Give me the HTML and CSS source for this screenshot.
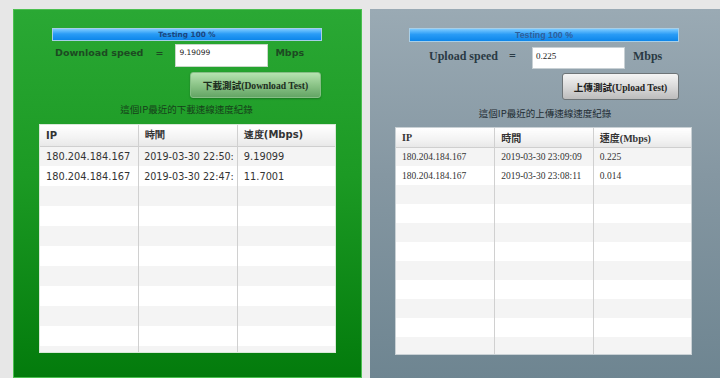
FILE: index.html
```html
<!DOCTYPE html>
<html>
<head>
<meta charset="utf-8">
<link rel="stylesheet" href="styles.css">
</head>
<body>
<div class="wrap">
  <section class="panel dl">
    <div class="progress"><span>Testing 100 %</span></div>
    <div class="speed-row">
      <span class="label">Download speed</span>
      <span class="eq">=</span>
      <span class="box">9.19099</span>
      <span class="unit">Mbps</span>
    </div>
    <div class="btn-row"><button class="btn">下載測試(Download Test)</button></div>
    <div class="caption">這個IP最近的下載速線速度紀錄</div>
    <div class="grid">
      <table>
        <thead><tr><th>IP</th><th>時間</th><th>速度(Mbps)</th></tr></thead>
        <tbody>
          <tr><td>180.204.184.167</td><td>2019-03-30 22:50:</td><td>9.19099</td></tr>
          <tr><td>180.204.184.167</td><td>2019-03-30 22:47:</td><td>11.7001</td></tr>
          <tr><td></td><td></td><td></td></tr>
          <tr><td></td><td></td><td></td></tr>
          <tr><td></td><td></td><td></td></tr>
          <tr><td></td><td></td><td></td></tr>
          <tr><td></td><td></td><td></td></tr>
          <tr><td></td><td></td><td></td></tr>
          <tr><td></td><td></td><td></td></tr>
          <tr><td></td><td></td><td></td></tr>
          <tr><td></td><td></td><td></td></tr>
        </tbody>
      </table>
    </div>
  </section>
  <section class="panel ul">
    <div class="progress"><span>Testing 100 %</span></div>
    <div class="speed-row">
      <span class="label">Upload speed</span>
      <span class="eq">=</span>
      <span class="box">0.225</span>
      <span class="unit">Mbps</span>
    </div>
    <div class="btn-row"><button class="btn">上傳測試(Upload Test)</button></div>
    <div class="caption">這個IP最近的上傳速線速度紀錄</div>
    <div class="grid">
      <table>
        <thead><tr><th>IP</th><th>時間</th><th>速度(Mbps)</th></tr></thead>
        <tbody>
          <tr><td>180.204.184.167</td><td>2019-03-30 23:09:09</td><td>0.225</td></tr>
          <tr><td>180.204.184.167</td><td>2019-03-30 23:08:11</td><td>0.014</td></tr>
          <tr><td></td><td></td><td></td></tr>
          <tr><td></td><td></td><td></td></tr>
          <tr><td></td><td></td><td></td></tr>
          <tr><td></td><td></td><td></td></tr>
          <tr><td></td><td></td><td></td></tr>
          <tr><td></td><td></td><td></td></tr>
          <tr><td></td><td></td><td></td></tr>
          <tr><td></td><td></td><td></td></tr>
          <tr><td></td><td></td><td></td></tr>
        </tbody>
      </table>
    </div>
  </section>
</div>
</body>
</html>
```

FILE: styles.css
```css
html, body {
  margin: 0;
  padding: 0;
  background: #e7e7e7;
  width: 720px;
  height: 378px;
  overflow: hidden;
}
.wrap {
  display: flex;
  gap: 8px;
  padding: 9px 0 0 13px;
  box-sizing: border-box;
  height: 378px;
}
.panel {
  box-sizing: border-box;
  height: 369px;
  display: flex;
  flex-direction: column;
}
.dl {
  width: 349px;
  background: linear-gradient(to bottom, #2aa834 0%, #1c9a24 45%, #037b0c 100%);
  border: 1px solid #4cc050;
  font-family: "DejaVu Sans", Verdana, sans-serif;
  padding: 18px 0 0 0;
}
.ul {
  width: 350px;
  background: linear-gradient(to bottom, #9aaab4 0%, #8597a2 45%, #6e8591 100%);
  font-family: "Liberation Serif", "Noto Sans CJK TC", serif;
  padding: 19px 0 0 0;
}
.progress {
  box-sizing: border-box;
  height: 13px;
  margin: 0 39px 0 38px;
  background: linear-gradient(to bottom, #7ccaff 0%, #2a9cf6 45%, #0d86ea 100%);
  border: 1px solid #a8cfe8;
  display: flex;
  align-items: center;
  justify-content: center;
}
.progress span {
  font-size: 7.3px;
  color: #1a4680;
  line-height: 1;
  font-weight: bold;
}
.ul .progress {
  margin: 0 41px 0 39px;
  height: 14px;
}
.ul .progress span {
  font-family: "Liberation Sans", Arial, sans-serif;
  font-size: 8.8px;
  font-weight: bold;
  color: #2f5f9a;
}
.speed-row {
  display: flex;
  align-items: center;
  margin-top: 3px;
  height: 23px;
}
.dl .speed-row { padding-left: 41px; }
.ul .speed-row { padding-left: 59px; margin-top: 5px; height: 22px; }
.label, .unit, .eq {
  font-weight: bold;
  font-size: 9.5px;
  color: #1d4a22;
  margin-bottom: 6px;
}
.eq {
  margin-left: 12px;
}
.box {
  box-sizing: border-box;
  width: 93px;
  height: 23px;
  background: #fff;
  border: 1px solid #c8d8c8;
  margin-left: 12px;
  font-size: 7.5px;
  color: #222;
  padding: 3px 0 0 3px;
}
.unit { margin-left: 7px; }
.ul .label, .ul .unit, .ul .eq {
  font-size: 12px;
  color: #2a3a44;
  margin-bottom: 3px;
}
.ul .eq { margin-left: 11px; }
.ul .box {
  height: 22px;
  margin-left: 16px;
  font-size: 9px;
  border-color: #c8d0d4;
}
.ul .unit { margin-left: 8px; }
.btn-row {
  display: flex;
  justify-content: flex-end;
  margin-top: 5px;
}
.btn {
  box-sizing: border-box;
  font-family: "Liberation Serif", "Noto Sans CJK TC", serif;
  font-weight: bold;
  font-size: 9.6px;
  color: #1d2e1e;
  border-radius: 3px;
  padding: 0;
}
.dl .btn {
  width: 131px;
  height: 26px;
  margin-right: 40px;
  background: linear-gradient(to bottom, #b6e3b0 0%, #8cc488 50%, #64a565 100%);
  border: 1px solid #86be86;
  box-shadow: 0 1px 2px rgba(0,0,0,0.25);
}
.ul .btn {
  width: 117px;
  height: 27px;
  margin-right: 41px;
  margin-top: -1px;
  color: #222;
  background: linear-gradient(to bottom, #f4f4f4 0%, #dadada 50%, #bcbcbc 100%);
  border: 1px solid #6d7477;
}
.caption {
  text-align: center;
  font-family: "Noto Sans CJK TC", sans-serif;
  font-size: 9.5px;
  line-height: 12px;
  color: #16401a;
}
.dl .caption { padding-right: 2px; margin-top: 5px; }
.ul .caption { color: #1e2c33; margin-top: 7px; }
.grid {
  box-sizing: border-box;
  margin: 9px 0 0 25px;
  width: 297px;
  height: 229px;
  overflow: hidden;
  background: #fff;
  border: 1px solid #d8e8d8;
}
.ul .grid {
  margin-top: 8px;
  height: 228px;
  border-color: #c9d1d5;
}
table {
  border-collapse: collapse;
  table-layout: fixed;
  width: 296px;
}
th, td {
  height: 20px;
  padding: 0 0 0 6px;
  text-align: left;
  white-space: nowrap;
  overflow: hidden;
  border-right: 1px solid #d0d0d0;
  color: #333;
  box-sizing: border-box;
}
th:last-child, td:last-child { border-right: none; }
th {
  height: 21px;
  font-weight: bold;
  font-size: 10px;
  background: linear-gradient(to bottom, #ffffff 0%, #f3f3f3 60%, #e8e8e8 100%);
  border-bottom: 1px solid #cfcfcf;
}
td {
  font-size: 9.8px;
}
.dl td:nth-child(2) { padding-left: 5px; font-size: 9.6px; }
tbody tr:nth-child(odd) td { background: #f4f4f4; }
tbody tr:nth-child(even) td { background: #ffffff; }
.ul th { height: 19px; font-size: 10px; }
.ul td { height: 19px; font-size: 9.5px; }
```
